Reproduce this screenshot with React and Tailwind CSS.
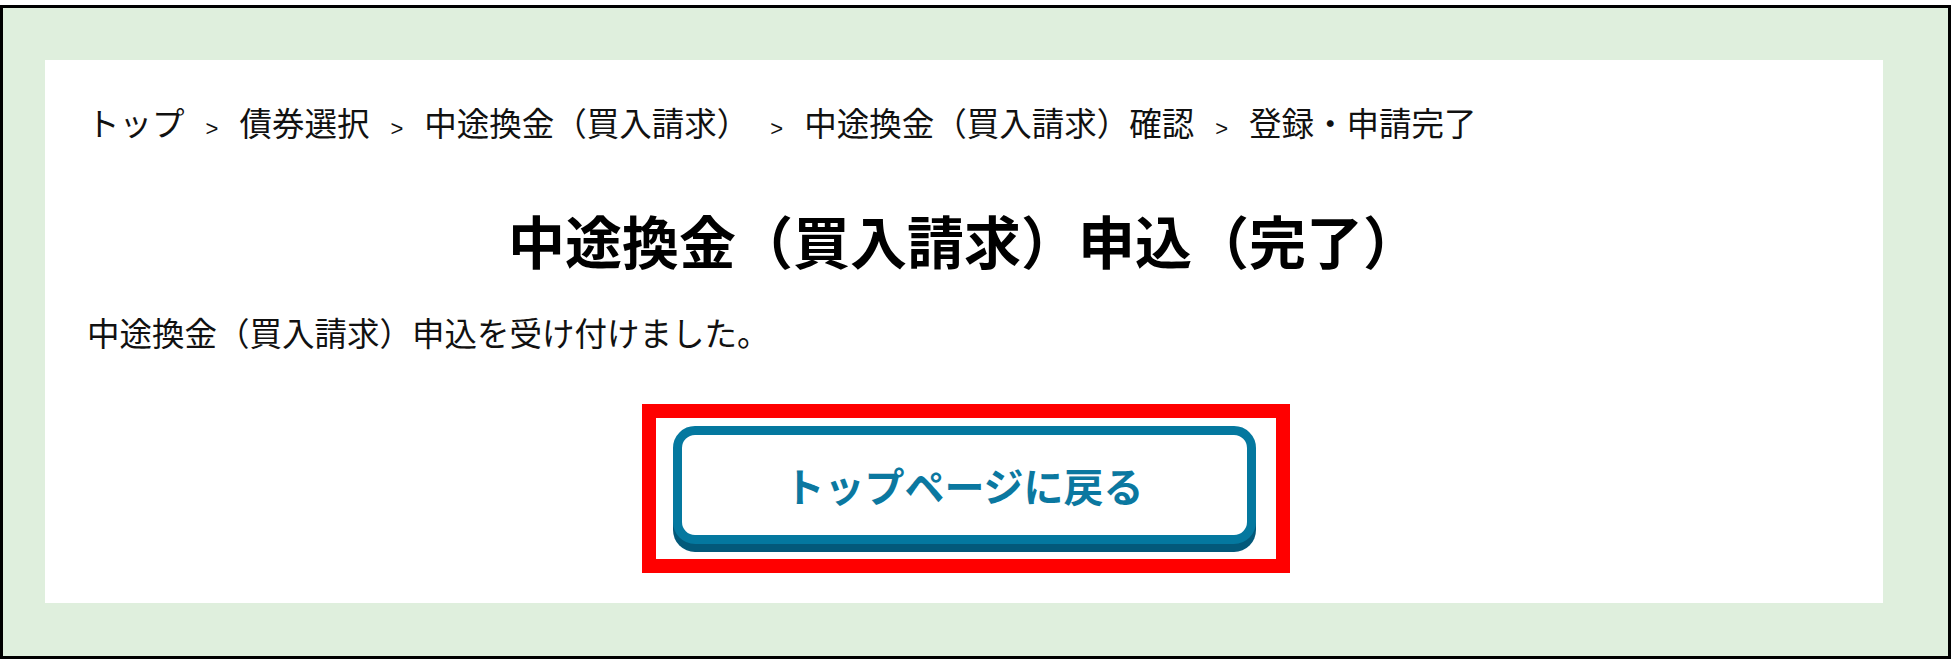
import React from "react";

const crumbs = [
  "トップ",
  "債券選択",
  "中途換金（買入請求）",
  "中途換金（買入請求）確認",
  "登録・申請完了",
];

const jp = "font-['Noto_Sans_CJK_JP','Noto_Sans',sans-serif]";

const Breadcrumb = () => (
  <div className="flex items-baseline pl-[42px] text-[32.5px] leading-[32px] text-[#111]">
    {crumbs.map((c, i) => (
      <React.Fragment key={c}>
        {i > 0 && (
          <span className="mx-[21px] font-['Liberation_Sans',sans-serif] text-[22px] leading-none">
            &gt;
          </span>
        )}
        <span>{c}</span>
      </React.Fragment>
    ))}
  </div>
);

const App = () => {
  return (
    <div className={`w-[1953px] h-[661px] bg-white pt-[5px] pr-[2px] ${jp}`}>
      <div className="h-[654px] border-[3px] border-black bg-[#dfefdd] pt-[52px] pl-[42px] pr-[65px]">
        <div className="h-[543px] bg-white pt-[46px]">
          <Breadcrumb />

          <h1 className="mt-[71px] text-center text-[57px] leading-[57px] font-bold text-black">
            中途換金（買入請求）申込（完了）
          </h1>

          <p className="mt-[48px] pl-[42px] text-[32.5px] leading-[32px] text-[#111]">
            中途換金（買入請求）申込を受け付けました。
          </p>

          <div className="mt-[56px] flex justify-center">
            <div className="ml-[3px] border-[14px] border-[#ff0000] pt-[8px] pb-[15px] pl-[17px] pr-[20px]">
              <button
                type="button"
                className="flex h-[118px] w-[583px] items-center justify-center rounded-[22px] border-[9px] border-[#04789f] bg-white shadow-[0_8px_0_#03597a] text-[40px] leading-none font-bold text-[#0b78a0]"
              >
                トップページに戻る
              </button>
            </div>
          </div>
        </div>
      </div>
    </div>
  );
};

export default App;
